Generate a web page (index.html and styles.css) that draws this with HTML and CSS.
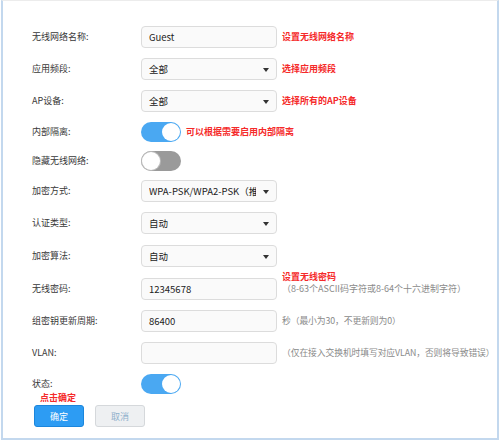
FILE: index.html
```html
<!DOCTYPE html>
<html>
<head>
<meta charset="utf-8">
<link rel="stylesheet" href="styles.css">
</head>
<body>
<div class="frame">
  <div class="form">
    <div class="row h32">
      <span class="lbl">无线网络名称:</span>
      <div class="field">Guest</div>
      <span class="note">设置无线网络名称</span>
    </div>
    <div class="row h32">
      <span class="lbl">应用频段:</span>
      <div class="field select"><span class="val">全部</span><span class="arrow"></span></div>
      <span class="note">选择应用频段</span>
    </div>
    <div class="row h32">
      <span class="lbl">AP设备:</span>
      <div class="field select"><span class="val">全部</span><span class="arrow"></span></div>
      <span class="note">选择所有的AP设备</span>
    </div>
    <div class="row h30">
      <span class="lbl">内部隔离:</span>
      <div class="toggle on"><span class="knob"></span></div>
      <span class="note">可以根据需要启用内部隔离</span>
    </div>
    <div class="row h28">
      <span class="lbl">隐藏无线网络:</span>
      <div class="toggle off"><span class="knob"></span></div>
    </div>
    <div class="row h32">
      <span class="lbl">加密方式:</span>
      <div class="field select"><span class="val">WPA-PSK/WPA2-PSK（推荐）</span><span class="arrow"></span></div>
    </div>
    <div class="row h32">
      <span class="lbl">认证类型:</span>
      <div class="field select"><span class="val">自动</span><span class="arrow"></span></div>
    </div>
    <div class="row h33">
      <span class="lbl">加密算法:</span>
      <div class="field select"><span class="val">自动</span><span class="arrow"></span></div>
    </div>
    <div class="row h33">
      <span class="lbl">无线密码:</span>
      <div class="field">12345678</div>
      <div class="stack">
        <span class="note-red">设置无线密码</span>
        <span class="hint">（8-63个ASCII码字符或8-64个十六进制字符）</span>
      </div>
    </div>
    <div class="row h32">
      <span class="lbl">组密钥更新周期:</span>
      <div class="field">86400</div>
      <span class="hint side">秒（最小为30，不更新则为0）</span>
    </div>
    <div class="row h32">
      <span class="lbl">VLAN:</span>
      <div class="field"></div>
      <span class="hint side">（仅在接入交换机时填写对应VLAN，否则将导致错误）</span>
    </div>
    <div class="row h30">
      <span class="lbl">状态:</span>
      <div class="toggle on"><span class="knob"></span></div>
    </div>
    <div class="actions">
      <span class="tip">点击确定</span>
      <div class="btns">
        <button class="btn primary">确定</button>
        <button class="btn plain">取消</button>
      </div>
    </div>
  </div>
</div>
</body>
</html>
```

FILE: styles.css
```css
* { box-sizing: border-box; }
html, body {
  margin: 0;
  padding: 0;
  background: #fff;
  font-family: "Noto Sans CJK SC", "Noto Sans", sans-serif;
  font-size: 9px;
  color: #333;
}
.frame {
  margin-left: 1px;
  width: 498px;
  height: 440px;
  border-top: 1px solid #ececec;
  border-left: 2px solid #c3d8ee;
  border-right: 2px solid #c3d8ee;
  border-bottom: 2px solid #c3d8ee;
}
.form {
  padding: 20px 0 0 29px;
}
.row {
  display: flex;
  align-items: center;
}
.h28 { height: 28px; }
.h30 { height: 30px; }
.h32 { height: 32px; }
.h33 { height: 33px; }
.lbl {
  width: 109px;
  flex: none;
  line-height: 12px;
  color: #383838;
}
.field {
  width: 136px;
  height: 22px;
  flex: none;
  border: 1px solid #dcdcdc;
  border-radius: 4px;
  background: #fafafa;
  padding: 0 7px;
  line-height: 20px;
  font-size: 9.5px;
  color: #222;
  display: flex;
  align-items: center;
}
.select { position: relative; padding-right: 20px; }
.select .val {
  white-space: nowrap;
  overflow: hidden;
  flex: 1;
}
.arrow {
  position: absolute;
  right: 7px;
  top: 9px;
  width: 0;
  height: 0;
  border-left: 3px solid transparent;
  border-right: 3px solid transparent;
  border-top: 4px solid #333;
}
.note, .note-red, .tip {
  color: #f52a2a;
  font-weight: bold;
  line-height: 12px;
}
.note { margin-left: 5px; }
.toggle {
  width: 40px;
  height: 20px;
  flex: none;
  border-radius: 10px;
  position: relative;
}
.toggle.on { background: #4aa8f2; }
.toggle.off { background: #9a9a9a; }
.knob {
  position: absolute;
  top: 1px;
  width: 18px;
  height: 18px;
  border-radius: 50%;
  background: #fff;
}
.on .knob { right: 1px; }
.off .knob { left: 1px; box-shadow: 0 0 0 1px #bbb; }
.stack {
  display: flex;
  flex-direction: column;
  align-self: flex-start;
  margin-top: -1px;
  margin-left: 5px;
}
.note-red { line-height: 11.5px; }
.hint {
  color: #8a8a8a;
  line-height: 11.5px;
  white-space: nowrap;
}
.hint.side {
  margin-left: 5px;
  font-size: 8.8px;
  letter-spacing: -0.1px;
}
.actions {
  margin-top: -7px;
  display: flex;
  flex-direction: column;
}
.tip {
  margin-left: 8px;
  height: 13px;
}
.btns {
  display: flex;
  gap: 11px;
  margin-left: 2px;
}
.btn {
  width: 50px;
  height: 22px;
  border-radius: 3px;
  font-family: "Noto Sans CJK SC", sans-serif;
  font-size: 9px;
  padding: 0;
}
.primary {
  background: #2d9cf3;
  border: 1px solid #1b86dc;
  color: #fff;
}
.plain {
  background: #eef0f2;
  border: 1px solid #d5d8db;
  color: #8fb0cc;
}
```
